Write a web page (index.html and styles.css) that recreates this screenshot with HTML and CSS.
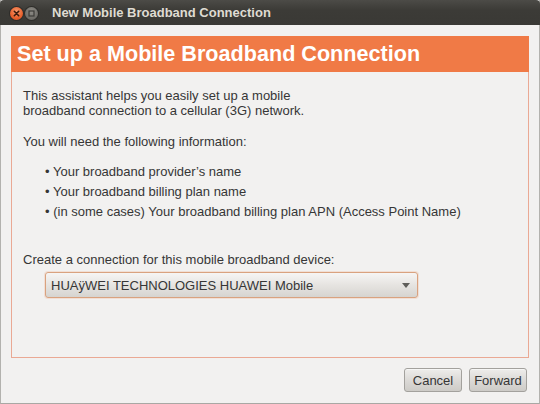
FILE: index.html
```html
<!DOCTYPE html>
<html>
<head>
<meta charset="utf-8">
<link rel="stylesheet" href="styles.css">
</head>
<body>
<div class="window">
  <div class="titlebar">
    <div class="controls">
      <span class="wbtn close">
        <svg width="13" height="13" viewBox="0 0 13 13"><path d="M4.3 4.3 L8.7 8.7 M8.7 4.3 L4.3 8.7" stroke="#3a1a0c" stroke-width="1.6" stroke-linecap="round"/></svg>
      </span>
      <span class="wbtn minim">
        <svg width="13" height="13" viewBox="0 0 13 13"><rect x="4" y="4" width="5" height="5" fill="none" stroke="#3c3b37" stroke-width="1.2"/></svg>
      </span>
    </div>
    <div class="title">New Mobile Broadband Connection</div>
  </div>
  <div class="body">
    <div class="frame">
      <div class="header">Set up a Mobile Broadband Connection</div>
      <div class="content">
        <p class="intro">This assistant helps you easily set up a mobile<br>broadband connection to a cellular (3G) network.</p>
        <p class="need">You will need the following information:</p>
        <ul class="list">
          <li>Your broadband provider’s name</li>
          <li>Your broadband billing plan name</li>
          <li>(in some cases) Your broadband billing plan APN (Access Point Name)</li>
        </ul>
        <p class="create">Create a connection for this mobile broadband device:</p>
        <div class="combo">
          <span class="combo-text">HUAÿWEI TECHNOLOGIES HUAWEI Mobile</span>
          <svg class="arrow" width="8" height="5" viewBox="0 0 8 5"><path d="M0 0 L8 0 L4 5 Z" fill="#5f5e5a"/></svg>
        </div>
      </div>
    </div>
    <div class="actions">
      <button class="btn">Cancel</button>
      <button class="btn">Forward</button>
    </div>
  </div>
</div>
</body>
</html>
```

FILE: styles.css
```css
* { box-sizing: border-box; }
html, body { margin: 0; padding: 0; }
body {
  width: 540px;
  height: 404px;
  background: #f2f1f0;
  font-family: "Liberation Sans", Arial, sans-serif;
  color: #363636;
  overflow: hidden;
}
.window {
  width: 540px;
  height: 404px;
  display: flex;
  flex-direction: column;
  border-left: 1px solid #b3b2ae;
  border-right: 1px solid #b3b2ae;
  border-bottom: 1px solid #a9a8a4;
  background: #f2f1f0;
}
.titlebar {
  height: 25px;
  flex: none;
  display: flex;
  align-items: center;
  background: linear-gradient(#4c4b47, #3c3b37 40%, #3a3935);
  margin: 0 -1px;
  border-radius: 4px 4px 0 0;
}
.controls {
  display: flex;
  gap: 2px;
  padding-left: 10px;
  padding-top: 2px;
  width: 52px;
}
.wbtn {
  width: 13px;
  height: 13px;
  border-radius: 50%;
  display: flex;
}
.close {
  background: radial-gradient(circle at 50% 35%, #f79a6e, #e9602c 60%, #c84a1e);
  box-shadow: 0 0 0 1px #2e2d2a;
}
.minim {
  background: radial-gradient(circle at 50% 35%, #8e8c86, #6d6b66 70%, #5a5954);
  box-shadow: 0 0 0 1px #2e2d2a;
}
.title {
  font-weight: bold;
  font-size: 13px;
  line-height: 25px;
  color: #dfdbd2;
}
.body {
  flex: 1;
  padding: 11px 10px 0 10px;
  display: flex;
  flex-direction: column;
}
.frame {
  height: 322px;
  border: 1px solid #eaa994;
  border-top: none;
  background: #f2f1f0;
}
.header {
  height: 36px;
  margin: 0 -1px;
  background: #f07a46;
  color: #ffffff;
  font-weight: bold;
  font-size: 21.6px;
  line-height: 36px;
  padding-left: 6px;
  white-space: nowrap;
}
.content {
  padding: 16px 0 0 11px;
  font-size: 13px;
  line-height: 15px;
}
.content p { margin: 0; }
.need { margin-top: 16px !important; }
.list {
  list-style: none;
  margin: 13px 0 0 0;
  padding: 0 0 0 22px;
  line-height: 20px;
}
.list li::before { content: "• "; }
.create { margin-top: 30px !important; }
.combo {
  margin: 5px 0 0 22px;
  width: 373px;
  height: 26px;
  border: 1px solid #d9a27f;
  border-radius: 3px;
  background: linear-gradient(#f6f5f4, #e6e4e1 50%, #d6d4d0);
  display: flex;
  align-items: center;
  justify-content: space-between;
  padding: 0 7px 0 5px;
  box-shadow: 0 0 0 1px rgba(240,170,130,0.25);
}
.combo-text { color: #363636; }
.actions {
  display: flex;
  justify-content: flex-end;
  gap: 7px;
  margin-top: 10px;
  padding-right: 2px;
}
.btn {
  width: 58px;
  height: 24px;
  border: 1px solid #a3a19d;
  border-radius: 3px;
  background: linear-gradient(#eeedeb, #dcdad7 50%, #cdcbc7);
  font-family: "Liberation Sans", Arial, sans-serif;
  font-size: 13px;
  color: #363636;
  padding: 0;
  box-shadow: inset 0 1px 0 rgba(255,255,255,0.5);
}
```
